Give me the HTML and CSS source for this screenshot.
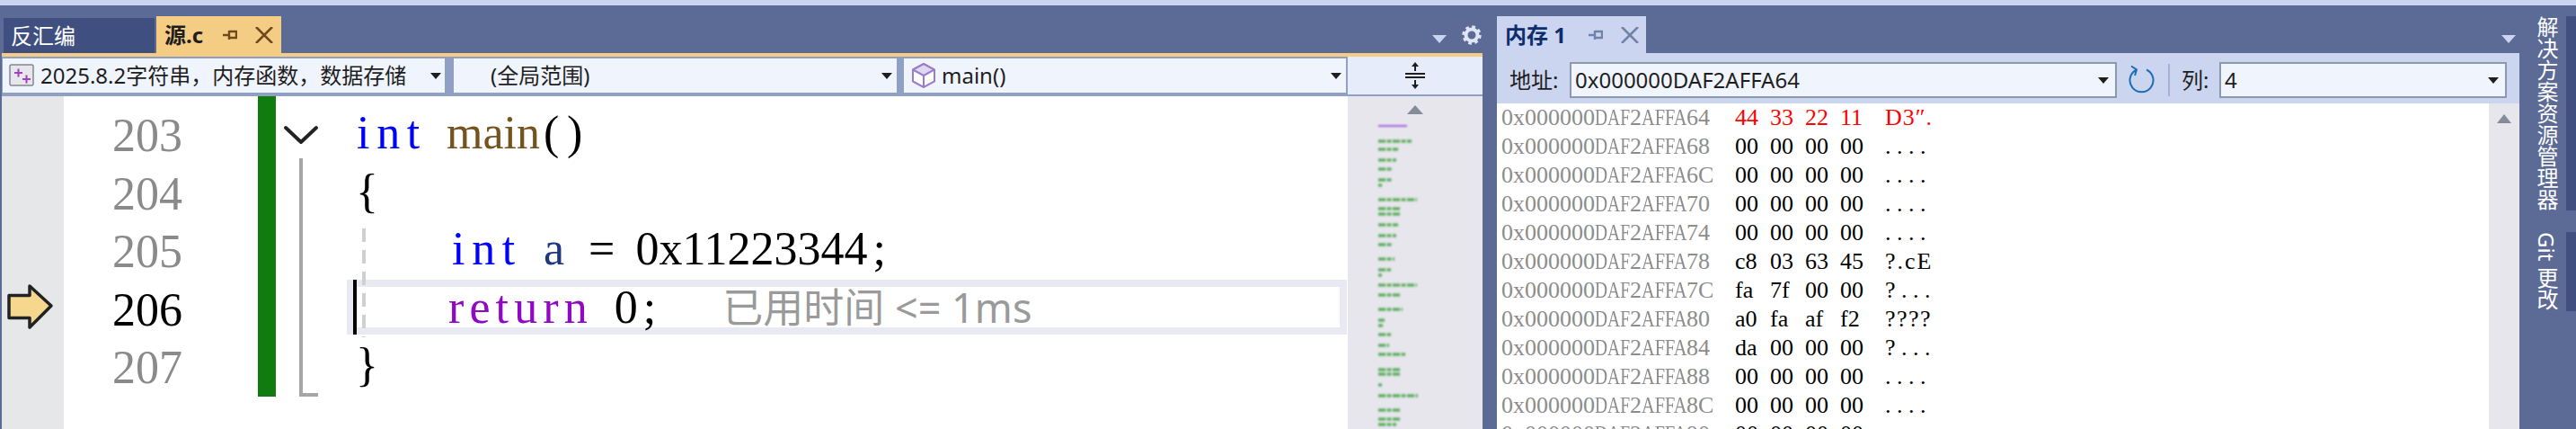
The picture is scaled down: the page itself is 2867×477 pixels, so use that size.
FILE: index.html
```html
<!DOCTYPE html>
<html lang="zh-CN">
<head>
<meta charset="utf-8">
<title>源.c</title>
<link rel="stylesheet" href="styles.css">
</head>
<body>
<div class="topstrip"></div>
<div class="workspace">
  <section class="docwell">
    <div class="tabbar">
      <div class="tab tab-off">反汇编</div>
      <div class="tab tab-src">
        <span class="tab-name">源.c</span>
        <svg class="pin" width="16" height="12" viewBox="0 0 16 12"><path d="M0 6H7M7 1V11M7 2H15V9H7" fill="none" stroke="currentColor" stroke-width="2.4"/></svg>
        <svg class="close" width="20" height="18" viewBox="0 0 20 18"><path d="M1 0L19 18M19 0L1 18" fill="none" stroke="currentColor" stroke-width="2.6"/></svg>
      </div>
      <div class="well-tools">
        <span class="drop"></span>
        <svg class="gear" width="22" height="22" viewBox="0 0 22 22"><circle cx="11" cy="11" r="6.5" fill="none" stroke="#dfe5f6" stroke-width="4"/><circle cx="11" cy="11" r="9" fill="none" stroke="#dfe5f6" stroke-width="3.4" stroke-dasharray="3.6 3.47"/></svg>
      </div>
    </div>
    <div class="accent"></div>
    <div class="navbar">
      <div class="combo combo-a">
        <svg class="ico" width="28" height="26" viewBox="0 0 28 26"><rect x="1" y="1" width="26" height="23" rx="1" fill="#e6e6ec" stroke="#555"/><path d="M6 10H15M10.500 5.500V14.500M15 17H24M19.500 12.500V21.500" stroke="#a03fc0" stroke-width="2"/></svg>
        <span class="combo-text">2025.8.2字符串，内存函数，数据存储</span><span class="tri"></span>
      </div>
      <div class="combo combo-b"><span class="combo-text">(全局范围)</span><span class="tri"></span></div>
      <div class="combo combo-c">
        <svg class="ico" width="26" height="28" viewBox="0 0 26 28"><path d="M13 1L25 7.500V20.500L13 27L1 20.500V7.500Z" fill="#fff" stroke="#9b7cc8" stroke-width="2"/><path d="M1 7.500L13 1L25 7.500L13 14Z" fill="#e0d8f0" stroke="#9b7cc8" stroke-width="2"/><path d="M13 14V27" stroke="#9b7cc8" stroke-width="2"/></svg>
        <span class="combo-text">main()</span><span class="tri"></span>
      </div>
      <div class="split">
        <svg width="24" height="30" viewBox="0 0 24 30"><path d="M1 13H23M1 17H23M12 3V10M12 20V27" fill="none" stroke="#1e1e1e" stroke-width="2"/><path d="M8 5L12 0L16 5ZM8 25L12 30L16 25Z" fill="#1e1e1e"/></svg>
      </div>
    </div>
    <div class="editor">
      <div class="glyphs">
        <svg class="arrow" width="54" height="52" viewBox="0 0 54 52"><path d="M8 13.500H31V3L55 25L31 49V38.500H8Z" fill="#f5d78e" stroke="#222" stroke-width="3.500" stroke-linejoin="round"/></svg>
      </div>
      <div class="linenos">
        <div class="ln">203</div>
        <div class="ln">204</div>
        <div class="ln">205</div>
        <div class="ln ln-cur">206</div>
        <div class="ln">207</div>
      </div>
      <div class="changebar"></div>
      <svg class="outline" width="86" height="370" viewBox="0 0 86 370">
        <path d="M11 35L28 51L45 35" fill="none" stroke="#222" stroke-width="4" stroke-linecap="round" stroke-linejoin="round"/>
        <path d="M28 69V332H47" fill="none" stroke="#a5a5a5" stroke-width="4"/>
      </svg>
      <div class="code">
        <div class="curline"></div>
        <div class="caret"></div>
        <div class="guide"></div>
        <div class="cl"><span class="k k-int">int</span> <span class="fn">main</span><span class="par">()</span></div>
        <div class="cl"><span class="brace">{</span></div>
        <div class="cl"><span class="ind"></span><span class="k k-int">int</span> <span class="var">a</span> <span class="eq">=</span> 0x11223344<span class="semi">;</span></div>
        <div class="cl"><span class="ind"></span><span class="ret">return</span> 0<span class="semi">;</span><span class="hint">已用时间 &lt;= 1ms</span></div>
        <div class="cl"><span class="brace">}</span></div>
      </div>
      <svg class="minimap" width="150" height="370" viewBox="0 0 150 370">
        <path class="mini-up" d="M75 10L84 20H66Z"/>
        <path class="mini-purple" d="M34 33H66"/>
        <path class="mini-lines" d="M34 50H71M34 59H56M34 71H54M34 81H49M34 93H50M34 99H38M34 115H77M34 125H58M34 131H58M34 143H56M34 155H54M34 165H49M34 181H52M34 193H48M34 199H38M34 210H77M34 221H58M34 237H61M34 249H41M34 255H39M34 265H48M34 277H46M34 287H64M34 304H58M34 309H58M34 321H38M34 333H78M34 349H59M34 359H59M34 365H54"/>
      </svg>
    </div>
  </section>

  <section class="memory">
    <div class="tabbar tabbar-mem">
      <div class="tab tab-mem">
        <span class="tab-name">内存 1</span>
        <svg class="pin" width="16" height="12" viewBox="0 0 16 12"><path d="M0 6H7M7 1V11M7 2H15V9H7" fill="none" stroke="currentColor" stroke-width="2.4"/></svg>
        <svg class="close" width="20" height="18" viewBox="0 0 20 18"><path d="M1 0L19 18M19 0L1 18" fill="none" stroke="currentColor" stroke-width="2.6"/></svg>
      </div>
      <div class="well-tools tools-mem"><span class="drop"></span></div>
    </div>
    <div class="memtools">
      <span class="lbl lbl-addr">地址:</span>
      <div class="field field-addr"><span>0x000000DAF2AFFA64</span><span class="tri"></span></div>
      <svg class="refresh" width="30" height="34" viewBox="0 0 30 34"><path d="M9 5.500A13 13 0 1 0 20 5.500M3 1.500L9 5.500L7 12" fill="none" stroke="#1a6fb5" stroke-width="2"/></svg>
      <span class="vsep"></span>
      <span class="lbl lbl-col">列:</span>
      <div class="field field-col"><span>4</span><span class="tri"></span></div>
    </div>
    <div class="membody">
      <div class="rows">
        <div class="row row-hot"><span class="addr">0x000000<span class="c3">DAF</span>2<span class="c4">AFFA</span>64</span><span class="hx">44</span><span class="hx">33</span><span class="hx">22</span><span class="hx">11</span><span class="asc asc-d3">D3″.</span></div>
        <div class="row"><span class="addr">0x000000<span class="c3">DAF</span>2<span class="c4">AFFA</span>68</span><span class="hx">00</span><span class="hx">00</span><span class="hx">00</span><span class="hx">00</span><span class="asc asc-dot">....</span></div>
        <div class="row"><span class="addr">0x000000<span class="c3">DAF</span>2<span class="c4">AFFA</span>6C</span><span class="hx">00</span><span class="hx">00</span><span class="hx">00</span><span class="hx">00</span><span class="asc asc-dot">....</span></div>
        <div class="row"><span class="addr">0x000000<span class="c3">DAF</span>2<span class="c4">AFFA</span>70</span><span class="hx">00</span><span class="hx">00</span><span class="hx">00</span><span class="hx">00</span><span class="asc asc-dot">....</span></div>
        <div class="row"><span class="addr">0x000000<span class="c3">DAF</span>2<span class="c4">AFFA</span>74</span><span class="hx">00</span><span class="hx">00</span><span class="hx">00</span><span class="hx">00</span><span class="asc asc-dot">....</span></div>
        <div class="row"><span class="addr">0x000000<span class="c3">DAF</span>2<span class="c4">AFFA</span>78</span><span class="hx">c8</span><span class="hx">03</span><span class="hx">63</span><span class="hx">45</span><span class="asc asc-mix">?.cE</span></div>
        <div class="row"><span class="addr">0x000000<span class="c3">DAF</span>2<span class="c4">AFFA</span>7C</span><span class="hx">fa</span><span class="hx">7f</span><span class="hx">00</span><span class="hx">00</span><span class="asc asc-dot">?...</span></div>
        <div class="row"><span class="addr">0x000000<span class="c3">DAF</span>2<span class="c4">AFFA</span>80</span><span class="hx">a0</span><span class="hx">fa</span><span class="hx">af</span><span class="hx">f2</span><span class="asc asc-q">????</span></div>
        <div class="row"><span class="addr">0x000000<span class="c3">DAF</span>2<span class="c4">AFFA</span>84</span><span class="hx">da</span><span class="hx">00</span><span class="hx">00</span><span class="hx">00</span><span class="asc asc-dot">?...</span></div>
        <div class="row"><span class="addr">0x000000<span class="c3">DAF</span>2<span class="c4">AFFA</span>88</span><span class="hx">00</span><span class="hx">00</span><span class="hx">00</span><span class="hx">00</span><span class="asc asc-dot">....</span></div>
        <div class="row"><span class="addr">0x000000<span class="c3">DAF</span>2<span class="c4">AFFA</span>8C</span><span class="hx">00</span><span class="hx">00</span><span class="hx">00</span><span class="hx">00</span><span class="asc asc-dot">....</span></div>
        <div class="row"><span class="addr">0x000000<span class="c3">DAF</span>2<span class="c4">AFFA</span>90</span><span class="hx">00</span><span class="hx">00</span><span class="hx">00</span><span class="hx">00</span><span class="asc asc-dot">....</span></div>
      </div>
      <div class="membar"><span class="mem-up"></span></div>
    </div>
  </section>

  <aside class="side">
    <div class="side-tab side-tab-a"><span>解决方案资源管理器</span></div>
    <div class="side-tab side-tab-b"><span>Git 更改</span></div>
  </aside>
</div>
</body>
</html>
```

FILE: styles.css
```css
* { box-sizing: border-box; }
html, body { margin: 0; padding: 0; }
body {
  width: 2867px;
  height: 477px;
  overflow: hidden;
  background: #5c6a96;
  color: #1e1e1e;
  font-family: "Noto Sans", "Noto Sans CJK SC", sans-serif;
  font-size: 24px;
}
.topstrip { height: 6px; background: #ccd5f0; }
.workspace { display: flex; height: 471px; }

/* document well */
.docwell { width: 1650px; padding-left: 2px; display: flex; flex-direction: column; flex: none; }
.tabbar { height: 53px; display: flex; align-items: flex-end; padding-left: 2px; flex: none; }
.tab { height: 41px; display: flex; align-items: center; flex: none; line-height: 1; }
.tab-off { width: 168px; height: 39px; background: #3f5080; color: #fff; padding-left: 8px; }
.tab-src { width: 139px; margin-left: 2px; background: #f5cc84; color: #6f4a1d; padding-left: 9px; }
.tab-name { font-weight: 700; color: #1e1e1e; white-space: nowrap; }
.tab .pin { margin-left: 22px; }
.tab .close { margin-left: 20px; }
.well-tools { margin-left: auto; display: flex; align-items: center; height: 22px; margin-bottom: 9px; padding-right: 1px; }
.drop { width: 0; height: 0; border-left: 8px solid transparent; border-right: 8px solid transparent; border-top: 9px solid #ccd5f0; margin-top: 8px; }
.gear { margin-left: 17px; }

.accent { height: 4px; background: #f5cc84; flex: none; }
.navbar { height: 44px; background: #8fa0c4; display: flex; align-items: flex-start; padding: 2px 0 0 1px; flex: none; }
.combo { height: 38px; background: #f0f4fd; display: flex; align-items: center; flex: none; line-height: 1; }
.combo-a { width: 492px; padding: 0 4px 0 7px; }
.combo-a .ico { margin-right: 7px; }
.combo-b { width: 493px; margin-left: 10px; padding: 0 5px 0 41px; }
.combo-c { width: 492px; margin-left: 8px; padding: 0 5px 0 9px; }
.combo-c .ico { margin-right: 7px; }
.combo-text { white-space: nowrap; }
.tri { width: 0; height: 0; margin-left: auto; border-left: 6px solid transparent; border-right: 6px solid transparent; border-top: 7px solid #1e1e1e; flex: none; }
.split { width: 150px; height: 42px; margin: -2px 0 0 2px; background: #e6ecfa; display: flex; align-items: center; justify-content: center; flex: none; }

/* editor */
.editor { flex: 1; min-height: 0; background: #fff; display: flex; overflow: hidden; }
.glyphs { width: 69px; background: #e6e7e8; flex: none; padding-top: 208px; }
.arrow { display: block; overflow: visible; }
.linenos {
  width: 216px; padding: 12px 0 0 54px; flex: none;
  font: 52px/64.5px "Liberation Serif", serif; color: #8a8a8a;
}
.ln { height: 64.5px; }
.ln-cur { color: #000; }
.changebar { width: 20px; height: 334px; background: #107c10; flex: none; }
.outline { width: 86px; flex: none; display: block; }

.code {
  position: relative; flex: 1; padding-top: 9px;
  font: 52px/64.5px "Liberation Serif", serif; color: #000;
}
.cl { height: 64.5px; position: relative; z-index: 1; white-space: pre; word-spacing: 13px; }
.curline { position: absolute; left: -7px; right: 1px; top: 204px; height: 61px; border: 8px solid #e8e9f2; }
.caret { position: absolute; left: 0; top: 204px; width: 4px; height: 61px; background: #000; z-index: 2; }
.guide {
  position: absolute; left: 10px; top: 147px; width: 4px; height: 121px; z-index: 2;
  background: repeating-linear-gradient(180deg, #d0d0d0 0 15px, transparent 15px 24px);
}
.ind { display: inline-block; width: 106px; }
.k { color: #0000ff; }
.k-int { letter-spacing: 7.7px; margin-left: 4px; margin-right: -4px; }
.fn { color: #74531f; }
.par { letter-spacing: 8.7px; margin-left: 4px; }
.brace { margin-left: 3px; }
.var { color: #1f377f; letter-spacing: 3px; margin-left: 2px; margin-right: -2px; }
.eq { letter-spacing: -3px; }
.semi { margin-left: 6px; }
.ret { color: #8f08c4; letter-spacing: 6.1px; margin-right: -2px; }
.hint {
  margin-left: 74px; color: #9a9a9a; word-spacing: 0;
  font: 45px/0 "Noto Sans", "Noto Sans CJK SC", sans-serif;
}
.minimap { width: 150px; flex: none; background: #e6e6ec; display: block; }
.mini-up { fill: #868b9c; }
.mini-lines { fill: none; stroke: #4fa84f; stroke-width: 3px; stroke-dasharray: 8 1.5 5 1.5; filter: blur(.9px); }
.mini-purple { fill: none; stroke: #a060e0; stroke-width: 2px; filter: blur(.9px); }

/* memory */
.memory { width: 1138px; margin-left: 16px; display: flex; flex-direction: column; flex: none; }
.tabbar-mem { padding-left: 0; }
.tab-mem { width: 166px; background: #ccd5f0; color: #6f83a8; padding-left: 9px; }
.tab-mem .tab-name { color: #0e2d6c; }
.tab-mem .pin { margin-left: 25px; }
.tab-mem .close { margin-left: 20px; }
.tools-mem { padding-right: 4px; }
.memtools { height: 56px; background: #ccd5f0; display: flex; align-items: center; padding-top: 4px; flex: none; line-height: 1; }
.lbl { white-space: nowrap; flex: none; }
.lbl-addr { margin-left: 14px; width: 67px; }
.lbl-col { margin-left: 13px; width: 42px; }
.field { height: 40px; background: #f0f4fd; border: 2px solid #8b98ae; display: flex; align-items: center; padding: 0 7px 0 4px; flex: none; }
.field-addr { width: 609px; }
.field-col { width: 320px; }
.refresh { margin-left: 13px; flex: none; }
.vsep { width: 2px; height: 36px; background: #a5b2d2; margin-left: 14px; flex: none; }
.membody { flex: 1; min-height: 0; display: flex; background: #fff; overflow: hidden; }
.rows { flex: 1; padding-left: 5px; font: 26px/32px "Liberation Serif", serif; color: #000; white-space: nowrap; }
.row { height: 32px; display: flex; }
.addr { width: 260px; color: #8c8c8c; flex: none; }
.c3, .c4 { display: inline-block; transform-origin: left center; }
.c3 { transform: scaleX(.75); margin-right: -13px; }
.c4 { transform: scaleX(.78); margin-right: -14.5px; }
.hx { width: 39px; flex: none; }
.asc { margin-left: 11px; }
.asc-dot { letter-spacing: 6.5px; }
.asc-d3 { letter-spacing: 1px; }
.asc-mix { letter-spacing: 2px; }
.asc-q { letter-spacing: 1.5px; }
.row-hot, .row-hot .asc { color: #f00; }
.membar { width: 34px; background: #e6e6ec; flex: none; padding-top: 12px; display: flex; justify-content: center; align-items: flex-start; }
.mem-up { width: 0; height: 0; border-left: 8px solid transparent; border-right: 8px solid transparent; border-bottom: 10px solid #868b9c; }

/* side */
.side { width: 63px; flex: none; padding-top: 12px; display: flex; flex-direction: column; gap: 24px; }
.side-tab { border-right: 11px solid #3f5080; display: flex; justify-content: flex-start; padding-left: 17px; color: #fff; font-size: 24px; line-height: 26px; }
.side-tab span { writing-mode: vertical-rl; white-space: nowrap; }
.side-tab-a { height: 216px; }
.side-tab-b { height: 88px; }
```
